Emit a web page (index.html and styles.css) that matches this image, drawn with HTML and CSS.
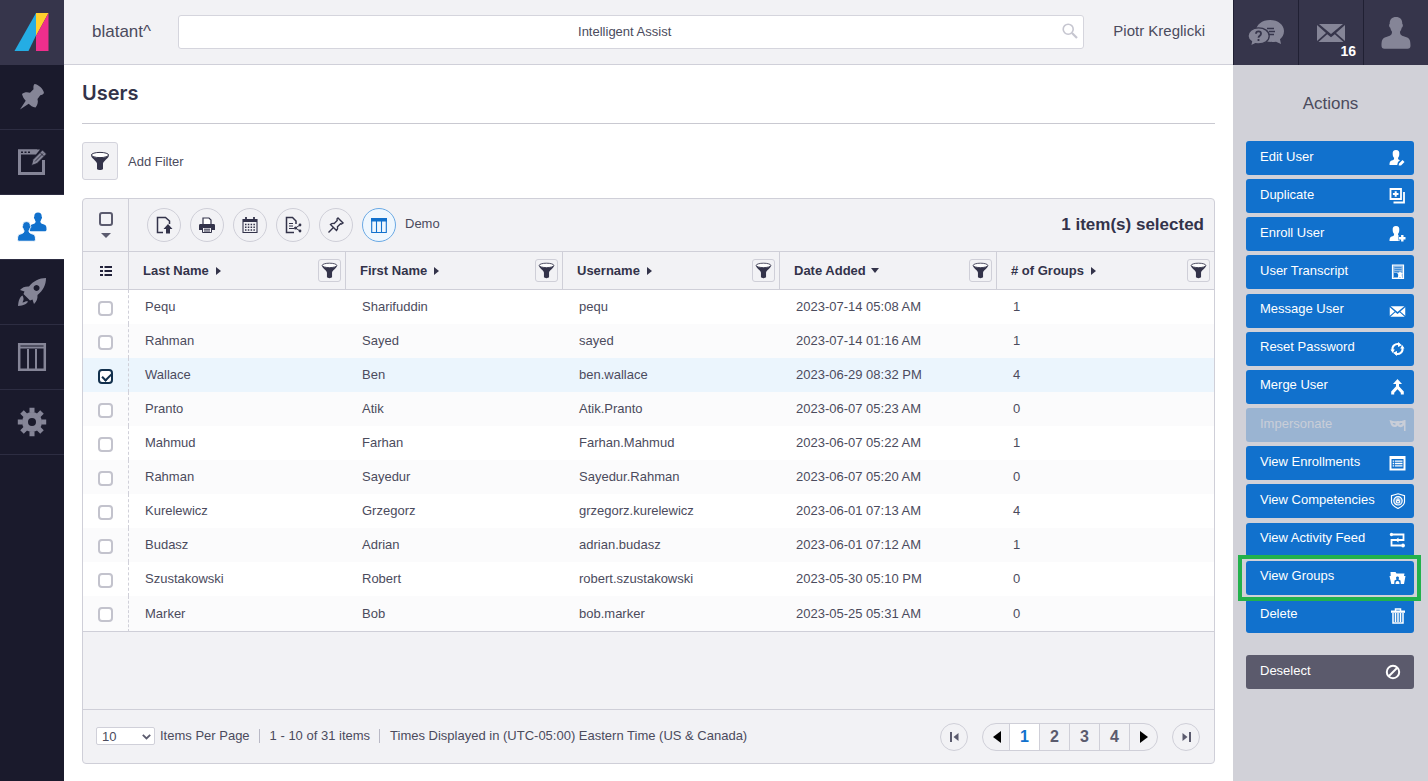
FILE: index.html
```html
<!DOCTYPE html>
<html lang="en">
<head>
<meta charset="utf-8">
<title>Users</title>
<link rel="stylesheet" href="styles.css">
</head>
<body>
<svg class="sprite" aria-hidden="true">
  <symbol id="funnel" viewBox="0 0 20 20"><ellipse cx="10" cy="4" rx="8.600" ry="2.600" fill="#fff" stroke="currentColor" stroke-width="1"/><path fill="currentColor" d="M1 4.200C3 7.600 17 7.600 19 4.200c0 2.800-6 6-6 8.300V18c-1 1.300-5 1.300-6 0v-5.500c0-2.300-6-5.500-6-8.300z"/></symbol>
  <symbol id="person" viewBox="0 0 30 34"><path fill="currentColor" d="M15 1c4 0 6.500 2.500 6.300 7 1 .3.8 3-.6 3.800-.3 2-1.200 3.200-1.700 4 0 3 1.500 4 5 5 4.500 1.200 5.500 3 5.500 9 0 2-1 3-3 3H3.500c-2 0-3-1-3-3 0-6 1-7.800 5.500-9 3.500-1 5-2 5-5-.5-.8-1.400-2-1.700-4-1.400-.8-1.600-3.500-.6-3.800C8.500 3.500 11 1 15 1z"/></symbol>
  <symbol id="mail" viewBox="0 0 28 18"><path fill="currentColor" d="M2 0h24L14 10zM0 1l9 8-9 8zM28 1l-9 8 9 8zM10.200 10.200 14 13.300l3.800-3.100L26.500 18h-25z"/></symbol>
</svg>
<div class="app">
  <nav class="rail" aria-label="Main">
    <a class="rail-item logo" href="#" aria-label="Home"><svg width="64" height="64" viewBox="0 0 64 64"><path fill="#24ade4" d="M36 13v22.500L28.500 51h-14z"/><path fill="#ffd02e" d="M36 13h12.500L36 36z"/><path fill="#f02e8c" d="M48.500 13v38H36V36z"/></svg></a>
    <a class="rail-item" href="#" aria-label="Pinned"><svg width="28" height="28" viewBox="0 0 28 28"><path fill="currentColor" d="M16.500 1c4 .5 8.500 4.500 9.500 9-1 2-2.500 1.700-3.700 2.200L19.500 16c1 3.500-.2 6.500-2 8.500-3-.5-5-2-6.800-3.800L2 26.500l5.700-8.700C6 16 4.500 13.500 4 11c2-1.800 5-2.300 8-1.300L15.500 6.300c0-1.800-.5-3.500 1-5.300z"/></svg></a>
    <a class="rail-item" href="#" aria-label="Editor"><svg width="30" height="28" viewBox="0 0 30 28"><path fill="none" stroke="currentColor" stroke-width="3" d="M20 3H2.500v22.500h24V12"/><path fill="currentColor" d="M1 1.500h22l-4 5H1z"/><path stroke="#1a1a2c" stroke-width="1.500" stroke-dasharray="2 1.500" d="M4 4.200h9"/><path fill="currentColor" stroke="#1a1a2c" stroke-width=".8" d="M14.500 17.500l1.500-6L25.500 2l4 4L20 15.500z"/><path stroke="#1a1a2c" stroke-width=".8" d="m18 13.500 8-8M23 4.500l4 4"/></svg></a>
    <a class="rail-item active" href="#" aria-label="Users"><svg width="30" height="30" viewBox="0 0 30 30"><use href="#person" x="12" y="0" width="18" height="20"/><use href="#person" x="0" y="9" width="19" height="21" stroke="#fff" stroke-width="1.500"/></svg></a>
    <a class="rail-item" href="#" aria-label="Launch"><svg width="30" height="30" viewBox="0 0 30 30"><path fill="currentColor" fill-rule="evenodd" d="M29 1c0 7-3 12.500-8.500 17 .2 4-.8 6.500-3.500 9-.6-1.500-1-3-1.500-4.500l-2.500 1-6.500-6.500 1-2.500L3 13c2.500-2.700 5-3.700 9-3.500C16.500 4 22 1 29 1zM19.500 8a3 3 0 1 0 .1 0z"/><path fill="currentColor" d="M5.500 18.500C3 20 1.500 22.500 1 29c6-.5 8.500-2 10-4.500-1.200-.2-2-.3-3 .3-.9.400-1.700.700-2.500.700.200-1 .8-1.800 1-2.800.2-1.500-.3-3-1-4.200z"/></svg></a>
    <a class="rail-item" href="#" aria-label="Tables"><svg width="30" height="30" viewBox="0 0 30 30"><path fill="none" stroke="currentColor" stroke-width="2.500" d="M2.200 2.200h25.600v25.600H2.200z"/><path stroke="currentColor" stroke-width="2" d="M2 5.500h26M11 7v20M19 7v20"/></svg></a>
    <a class="rail-item" href="#" aria-label="Settings"><svg width="30" height="30" viewBox="0 0 30 30"><circle cx="15" cy="15" r="7" fill="none" stroke="currentColor" stroke-width="6"/><path stroke="currentColor" stroke-width="5" d="M15 .8v5M15 24.200v5M.8 15h5M24.200 15h5M5 5l3.500 3.500M21.500 21.500 25 25M25 5l-3.500 3.500M8.500 21.500 5 25"/></svg></a>
  </nav>

  <div class="center">
    <header class="topbar">
      <span class="brand">blatant^</span>
      <form class="search" role="search">
        <input type="search" aria-label="Intelligent Assist" placeholder="Intelligent Assist">
        <button type="button" aria-label="Search"><svg width="16" height="16" viewBox="0 0 16 16" fill="none" stroke="#c6c6d0"><circle cx="6.200" cy="6.200" r="5" stroke-width="1.600"/><path stroke-width="2.200" d="m10 10 5 5"/></svg></button>
      </form>
      <span class="account">Piotr Kreglicki</span>
    </header>
    <main class="content">
      <h1>Users</h1>
      <div class="filter">
        <button type="button" id="add-filter" aria-labelledby="add-filter-label"><svg width="20" height="20"><use href="#funnel"/></svg></button>
        <label id="add-filter-label" for="add-filter">Add Filter</label>
      </div>
      <section class="panel">
        <div class="toolbar">
          <div class="select-all">
            <input type="checkbox" aria-label="Select all">
            <svg width="10" height="5" viewBox="0 0 10 5"><path fill="#5b5b6e" d="M0 0h10L5 5z"/></svg>
          </div>
          <div class="tools">
            <button type="button" aria-label="Export"><svg viewBox="0 0 18 18"><path fill="none" stroke="currentColor" stroke-width="1.500" d="M8 16.500H2.500v-15h8L14.500 5v3"/><path fill="currentColor" d="M13 8l4.500 5H15v4.500h-4V13H8.500z"/></svg></button>
            <button type="button" aria-label="Print"><svg viewBox="0 0 18 18"><path fill="#fff" stroke="currentColor" stroke-width="1.200" d="M5 8V2h6l2 2v4"/><path fill="currentColor" d="M2.500 8h13c1 0 1.500.5 1.500 1.500V14H1V9.500C1 8.500 1.500 8 2.500 8z"/><path fill="#f2f2f5" stroke="currentColor" d="M4.500 11.500h9v5h-9z"/><path stroke="currentColor" d="M6 13.200h6M6 15h6"/></svg></button>
            <button type="button" aria-label="Schedule"><svg viewBox="0 0 18 18"><path fill="none" stroke="currentColor" stroke-width="1.100" d="M2 3.500h14v13H2z"/><path fill="currentColor" d="M2 3h14v3H2z"/><path stroke="currentColor" stroke-width="1.800" d="M5 1v4M13 1v4"/><path stroke="currentColor" stroke-width="1.500" stroke-dasharray="1.500 1.300" d="M4 8.500h10.500M4 11.300h10.500M4 14h10.500"/></svg></button>
            <button type="button" aria-label="Share report"><svg viewBox="0 0 18 18"><path fill="none" stroke="currentColor" stroke-width="1.500" d="M10 16.500H2.500v-15h6L12 5v3"/><path fill="none" stroke="currentColor" stroke-width="1.200" d="M5 7.500h4M5 10h4M5 12.500h5"/><path fill="none" stroke="currentColor" d="m16 9-4.500 3 4.500 3"/><circle cx="16" cy="9" r="1.400" fill="currentColor"/><circle cx="11.500" cy="12" r="1.500" fill="currentColor"/><circle cx="16" cy="15" r="1.400" fill="currentColor"/></svg></button>
            <button type="button" aria-label="Pin"><svg viewBox="0 0 18 18"><path fill="none" stroke="currentColor" stroke-width="1.400" d="M11 2l5 5-1.500 1-1-.2-3 3c.4 1.500 0 2.700-1 3.700L3.500 8.500c1-1 2.300-1.400 3.700-1l3-3L10 3zM6.200 11.800 1.500 16.500"/></svg></button>
            <button type="button" class="on" aria-label="Layout" id="layout"><svg viewBox="0 0 18 18"><path fill="none" stroke="currentColor" stroke-width="1.100" d="M1.700 2.700h14.600v13.800H1.700zM6.500 5v11M11.500 5v11"/><path fill="currentColor" d="M1 2h16v3.500H1z"/></svg></button>
            <label for="layout">Demo</label>
          </div>
          <strong>1 item(s) selected</strong>
        </div>
        <table>
          <colgroup><col class="pick"><col><col><col><col><col></colgroup>
          <thead><tr>
            <th><button type="button" class="list" aria-label="Options"><svg width="12" height="10" viewBox="0 0 12 10"><path stroke="currentColor" stroke-width="2" d="M0 1h3M4.500 1H12M0 5h3M4.500 5H12M0 9h3M4.500 9H12"/></svg></button></th>
            <th><div class="head"><span>Last Name</span><i class="right"></i><button type="button" aria-label="Filter last name"><svg width="17" height="17"><use href="#funnel"/></svg></button></div></th>
            <th><div class="head"><span>First Name</span><i class="right"></i><button type="button" aria-label="Filter first name"><svg width="17" height="17"><use href="#funnel"/></svg></button></div></th>
            <th><div class="head"><span>Username</span><i class="right"></i><button type="button" aria-label="Filter username"><svg width="17" height="17"><use href="#funnel"/></svg></button></div></th>
            <th><div class="head"><span>Date Added</span><i class="down"></i><button type="button" aria-label="Filter date added"><svg width="17" height="17"><use href="#funnel"/></svg></button></div></th>
            <th><div class="head"><span># of Groups</span><i class="right"></i><button type="button" aria-label="Filter groups"><svg width="17" height="17"><use href="#funnel"/></svg></button></div></th>
          </tr></thead>
          <tbody>
            <tr><td><input type="checkbox" aria-label="Pequ"></td><td>Pequ</td><td>Sharifuddin</td><td>pequ</td><td>2023-07-14 05:08 AM</td><td>1</td></tr>
            <tr><td><input type="checkbox" aria-label="Rahman, Sayed"></td><td>Rahman</td><td>Sayed</td><td>sayed</td><td>2023-07-14 01:16 AM</td><td>1</td></tr>
            <tr class="picked"><td><input type="checkbox" aria-label="Wallace" checked></td><td>Wallace</td><td>Ben</td><td>ben.wallace</td><td>2023-06-29 08:32 PM</td><td>4</td></tr>
            <tr><td><input type="checkbox" aria-label="Pranto"></td><td>Pranto</td><td>Atik</td><td>Atik.Pranto</td><td>2023-06-07 05:23 AM</td><td>0</td></tr>
            <tr><td><input type="checkbox" aria-label="Mahmud"></td><td>Mahmud</td><td>Farhan</td><td>Farhan.Mahmud</td><td>2023-06-07 05:22 AM</td><td>1</td></tr>
            <tr><td><input type="checkbox" aria-label="Rahman, Sayedur"></td><td>Rahman</td><td>Sayedur</td><td>Sayedur.Rahman</td><td>2023-06-07 05:20 AM</td><td>0</td></tr>
            <tr><td><input type="checkbox" aria-label="Kurelewicz"></td><td>Kurelewicz</td><td>Grzegorz</td><td>grzegorz.kurelewicz</td><td>2023-06-01 07:13 AM</td><td>4</td></tr>
            <tr><td><input type="checkbox" aria-label="Budasz"></td><td>Budasz</td><td>Adrian</td><td>adrian.budasz</td><td>2023-06-01 07:12 AM</td><td>1</td></tr>
            <tr><td><input type="checkbox" aria-label="Szustakowski"></td><td>Szustakowski</td><td>Robert</td><td>robert.szustakowski</td><td>2023-05-30 05:10 PM</td><td>0</td></tr>
            <tr><td><input type="checkbox" aria-label="Marker"></td><td>Marker</td><td>Bob</td><td>bob.marker</td><td>2023-05-25 05:31 AM</td><td>0</td></tr>
          </tbody>
        </table>
        <footer class="foot">
          <div class="info">
            <span class="size"><select id="size"><option>10</option><option>25</option><option>50</option></select><svg width="9" height="6" viewBox="0 0 9 6"><path fill="none" stroke="#5b5b6e" stroke-width="1.800" d="m.8.8 3.700 3.700L8.200.8"/></svg></span>
            <label for="size">Items Per Page</label>
            <span class="part">1 - 10 of 31 items</span>
            <span class="part">Times Displayed in (UTC-05:00) Eastern Time (US &amp; Canada)</span>
          </div>
          <nav class="pages" aria-label="Pages">
            <button type="button" class="end" aria-label="First page"><svg width="9" height="10" viewBox="0 0 9 10"><path fill="#5b5b6e" d="M0 0h2v10H0zM8.500 1v8L3.500 5z"/></svg></button>
            <div class="group">
              <button type="button" aria-label="Previous page"><svg width="8" height="12" viewBox="0 0 8 12"><path d="M8 0v12L0 6z"/></svg></button>
              <button type="button" class="current">1</button>
              <button type="button">2</button>
              <button type="button">3</button>
              <button type="button">4</button>
              <button type="button" aria-label="Next page"><svg width="8" height="12" viewBox="0 0 8 12"><path d="M0 0v12l8-6z"/></svg></button>
            </div>
            <button type="button" class="end" aria-label="Last page"><svg width="9" height="10" viewBox="0 0 9 10"><path fill="#5b5b6e" d="M7 0h2v10H7zM.5 1v8l5-4z"/></svg></button>
          </nav>
        </footer>
      </section>
    </main>
  </div>

  <aside class="side">
    <div class="quick">
      <button type="button" aria-label="Help chat"><svg width="38" height="30" viewBox="0 0 38 30"><path fill="currentColor" d="M23 2c8 0 14 4.800 14 11 0 4-2 6.500-4 8.200l1 4.800-5-2.300c-12 1.300-20-3.700-20-10.700C9 6.800 15 2 23 2z"/><path stroke="#36354b" stroke-width="1.300" d="M20 10.500h7M22 13.500h6M21 16.500h6"/><path fill="currentColor" stroke="#36354b" stroke-width="1.300" d="M11.500 9.800c6 0 10.700 3.500 10.700 8.200s-4.700 8-10.700 8c-1 0-2-.1-3-.4L3.500 28l1-4.500C2.300 22 1 20.200 1 18c0-4.700 4.500-8.200 10.500-8.200z"/><path fill="none" stroke="#36354b" stroke-width="1.800" d="M9 15.700c.2-3.200 5-2.900 5 0 0 2-2.500 2-2.500 4M11.500 21v2"/></svg></button>
      <button type="button" aria-label="Messages, 16"><svg width="28" height="18"><use href="#mail"/></svg><span class="count">16</span></button>
      <button type="button" aria-label="Profile"><svg width="30" height="34"><use href="#person"/></svg></button>
    </div>
    <h2>Actions</h2>
    <ul class="actions">
      <li><button type="button">Edit User<svg viewBox="0 0 16 16"><path fill="currentColor" d="M6.500 0C9 0 10 1.500 9.800 4c0 2-.5 3-1.300 3.800 0 1.500.5 2 2 2.500L8.500 12l-.8 3H0c0-3 .5-4 3-4.700 1.300-.4 1.600-1 1.600-2.500C3.700 7 3.200 6 3.200 4 3 1.500 4 0 6.500 0zM9.500 13.500 13 10l2 2-3.500 3.500H9.200z"/></svg></button></li>
      <li><button type="button">Duplicate<svg viewBox="0 0 16 16"><path fill="none" stroke="currentColor" stroke-width="1.800" d="M1 1h10.500v10H1zM14.500 4v10.500H4"/><path stroke="currentColor" stroke-width="2" d="M6.200 3.200v5.600M3.400 6h5.600"/></svg></button></li>
      <li><button type="button">Enroll User<svg viewBox="0 0 16 16"><path fill="currentColor" d="M6.500 0C9 0 10 1.500 9.800 4c0 2-.5 3-1.300 3.800 0 1.200.3 1.800 1 2.200v3.500h1V15H0c0-3 .5-4 3-4.700 1.300-.4 1.600-1 1.600-2.500C3.700 7 3.200 6 3.200 4 3 1.500 4 0 6.500 0z"/><path stroke="#1171cd" stroke-width="4.500" d="M12.800 8v8M9 12.200h7"/><path stroke="currentColor" stroke-width="2.400" d="M12.800 9v6.500M9.500 12.200H16"/></svg></button></li>
      <li><button type="button">User Transcript<svg viewBox="0 0 16 16"><path fill="#8ebbe8" stroke="currentColor" stroke-width="1.200" d="M3 1h11v13.500H3z"/><path stroke="#1171cd" stroke-width=".6" d="M5 3.500h7M5 5.500h7M5 7.500h7"/><path fill="#1171cd" d="M4.500 9h4v4h-4z"/><path fill="currentColor" d="m10.500 7 1 2 2 .3-1.500 1.500 1 4.200-2.500-2-2.500 2 1-4.200-1.500-1.500 2-.3z"/></svg></button></li>
      <li><button type="button">Message User<svg viewBox="0 0 16 16"><use href="#mail" y="3" width="16" height="11"/></svg></button></li>
      <li><button type="button">Reset Password<svg viewBox="0 0 16 16"><path fill="none" stroke="currentColor" stroke-width="2" d="M3.200 9.500A5 5 0 0 1 10 3.400M12.800 6.500A5 5 0 0 1 6 12.600"/><path fill="currentColor" d="M8.500 1 12.500 4.200 8.500 6zM7.500 10v5L3.500 11.800zM1 8.500h4.400L3.200 12zM10.600 7.500H15L12.800 4z"/></svg></button></li>
      <li><button type="button">Merge User<svg viewBox="0 0 16 16"><path fill="none" stroke="currentColor" stroke-width="3" d="M8 2v6.500M3.200 15.500v-2.300L8 8l4.800 5.200v2.300"/><path fill="currentColor" d="m8 0 4.500 5h-9z"/></svg></button></li>
      <li><button type="button" disabled>Impersonate<svg viewBox="0 0 16 16"><path fill="currentColor" fill-rule="evenodd" d="M0 3c4 1.500 6 1.500 8 1 2 .3 4 .2 7-1h1v11h-1.500V8c-1 2.500-5 3-6.500.5C6.500 11 2 10.500 1 6.500zM3 6.500c1 1.300 2.500 1.500 3.500.5-1-1-2.500-1.200-3.500-.5zm6.500.5c1 1 2.500.8 3.500-.5-1-.7-2.500-.5-3.500.5z"/></svg></button></li>
      <li><button type="button">View Enrollments<svg viewBox="0 0 16 16"><path fill="none" stroke="currentColor" stroke-width="2" d="M1 2h14v12.500H1z"/><path fill="currentColor" d="M1 1h14v3H1z"/><path stroke="currentColor" stroke-width="1.300" d="M3.200 6.200h1.500M5.500 6.200h7.500M3.200 8.500h1.500M5.500 8.500h7.500M3.200 10.800h1.500M5.500 10.800h7.500"/></svg></button></li>
      <li><button type="button">View Competencies<svg viewBox="0 0 16 16"><path fill="none" stroke="currentColor" stroke-width="1.200" d="m8.500.8 6.500 2V9c0 3-3.500 5-6.500 6.500C5.500 14 2 12 2 9V2.800z"/><circle cx="8.500" cy="7.800" r="4.200" fill="#5b9bdc" stroke="currentColor" stroke-width="1.200"/><path fill="none" stroke="currentColor" d="M7 7.500h3v2.300H7zM7.500 7.500V6h2v1.500"/></svg></button></li>
      <li><button type="button">View Activity Feed<svg viewBox="0 0 16 16"><path fill="none" stroke="currentColor" stroke-width="1.800" d="M3 2.500h11V8H2v5.500h10"/><circle cx="2" cy="2.500" r="1.700" fill="currentColor"/><circle cx="13.500" cy="13.500" r="1.900" fill="currentColor"/><path fill="currentColor" d="M9 5.500v5L6 8z"/></svg></button></li>
      <li class="highlight"><button type="button">View Groups<svg viewBox="0 0 16 16"><path fill="currentColor" d="M1 2h5l1 1.500h8L14.500 6H16l-1.500 8h-3.200L11 10.500 9 9.500 9.500 8c0-2-3-2-3 0L7 9.500l-2 1-.3 3.500H1.800L0 6h1.200z"/><path fill="currentColor" d="M6 14c0-2 .5-3 2-3s2 1 2 3z"/></svg></button></li>
      <li><button type="button">Delete<svg viewBox="0 0 16 16"><path fill="none" stroke="currentColor" stroke-width="1.500" d="M6 3V1h5v2"/><path fill="currentColor" d="M1.500 2.500h14v2.300h-14z"/><path fill="none" stroke="currentColor" stroke-width="1.500" d="M3.500 5v10h10V5M6 5v9M8.500 5v9M11 5v9"/></svg></button></li>
    </ul>
    <button type="button" class="deselect">Deselect<svg viewBox="0 0 16 16" fill="none" stroke="currentColor" stroke-width="2"><circle cx="8" cy="8" r="6.200"/><path d="m4 12 8-8"/></svg></button>
  </aside>
</div>
</body>
</html>
```
FILE: styles.css
```css
* { box-sizing: border-box; }
body {
  margin: 0;
  font: 13px/18px "Liberation Sans", Arial, sans-serif;
  color: #4b4b5d;
  background: #fff;
}
button, input, select { font: inherit; color: inherit; margin: 0; }
button {
  display: flex;
  align-items: center;
  justify-content: center;
  padding: 0;
  border: 0;
  background: none;
}
svg { display: block; flex: none; }
.sprite { position: absolute; width: 0; height: 0; }

.app {
  display: grid;
  grid-template-columns: 64px minmax(0, 1fr) 195px;
  min-height: 100vh;
}

.rail { background: #1a1a2c; }
.rail-item {
  display: flex;
  align-items: center;
  justify-content: center;
  height: 65px;
  border-bottom: 1px solid #2d2d42;
  color: #858597;
}
.rail-item.logo { background: #36354b; border-color: #36354b; }
.rail-item.active { background: #fff; color: #1171cd; }

.center { display: flex; flex-direction: column; }
.topbar {
  display: flex;
  align-items: center;
  height: 65px;
  padding: 0 28px;
  border-bottom: 1px solid #d0d0d9;
  background: #f2f2f5;
}
.brand { flex: none; width: 86px; font-size: 17px; }
.search {
  position: relative;
  flex: 1;
  height: 34px;
}
.search input {
  width: 100%;
  height: 100%;
  padding: 0 14px 2px;
  border: 1px solid #d5d5dd;
  border-radius: 3px;
  background: #fff;
  text-align: center;
  outline: 0;
}
.search input::placeholder { color: #4b4b5d; opacity: 1; }
.search button { position: absolute; right: 6px; top: 8px; }
.account { margin-left: 29px; padding-bottom: 2px; font-size: 15px; }

.content {
  flex: 1;
  display: flex;
  flex-direction: column;
  padding: 0 18px 17px;
}
h1 {
  margin: 0;
  padding: 16px 0 17px;
  border-bottom: 1px solid #c9c9d1;
  font: 600 20px/25px Inter, sans-serif;
  color: #33334a;
}
.filter { display: flex; align-items: center; gap: 10px; margin: 18px 0; }
.filter label { padding-top: 2px; }
.filter button {
  width: 36px;
  height: 38px;
  border: 1px solid #d3d3dc;
  border-radius: 3px;
  background: #f2f2f5;
  color: #33334a;
}

.panel {
  flex: 1;
  display: flex;
  flex-direction: column;
  border: 1px solid #cfcfd8;
  border-radius: 4px;
  background: #f2f2f5;
}
.toolbar {
  display: flex;
  align-items: center;
  height: 53px;
  border-bottom: 1px solid #cfcfd8;
}
.select-all {
  display: flex;
  flex-direction: column;
  align-items: center;
  justify-content: center;
  gap: 7px;
  width: 46px;
  height: 100%;
  padding-bottom: 1px;
  border-right: 1px solid #cfcfd8;
}
.tools { flex: 1; display: flex; align-items: center; gap: 9px; padding-left: 18px; }
.tools label { padding-bottom: 2px; }
.tools button {
  width: 34px;
  height: 34px;
  border: 1px solid #cfcfd8;
  border-radius: 50%;
  color: #33334a;
}
.tools button svg { width: 18px; height: 18px; }
.tools button.on { border-color: #6aa9e4; background: #eff7fe; color: #1171cd; }
.toolbar strong { padding-right: 10px; font-size: 17px; color: #33334a; }

input[type="checkbox"] {
  appearance: none;
  display: block;
  width: 15px;
  height: 15px;
  border: 2px solid #c3c3cd;
  border-radius: 4px;
  background: #fff;
}
.select-all input[type="checkbox"] {
  width: 14px;
  height: 14px;
  border-color: #5b5b6e;
  border-radius: 3px;
  background: none;
}
input[type="checkbox"]:checked { border-color: #12304d; }
input[type="checkbox"]:checked::after {
  content: "";
  display: block;
  width: 8px;
  height: 4px;
  margin: 2px;
  border: solid #12304d;
  border-width: 0 0 2px 2px;
  transform: rotate(-45deg);
}

table {
  width: 100%;
  table-layout: fixed;
  border-collapse: separate;
  border-spacing: 0;
}
.pick { width: 46px; }
th {
  height: 38px;
  padding: 0;
  border-right: 1px solid #cfcfd8;
  border-bottom: 1px solid #cfcfd8;
  color: #33334a;
}
th:last-child { border-right: 0; }
.list { width: 100%; height: 36px; color: #22223a; }
.head { display: flex; align-items: center; padding: 0 4px 0 14px; }
.head button {
  width: 23px;
  height: 23px;
  margin-left: auto;
  border: 1px solid #cfcfd8;
  border-radius: 3px;
}
.right {
  margin-left: 7px;
  border: solid transparent;
  border-width: 4px 0 4px 5px;
  border-left-color: #33334a;
}
.down {
  margin-left: 5px;
  border: solid transparent;
  border-width: 5px 4px 0;
  border-top-color: #33334a;
}
td { height: 34px; padding: 0 0 0 16px; background: #fff; }
td:first-child { padding: 2px 0 0 15px; border-right: 1px dashed #d0d0d9; }
tr:nth-child(even) td { background: #fbfbfc; }
tr.picked td { background: #ebf5fd; }
tbody tr:last-child td { height: 36px; border-bottom: 1px solid #cfcfd8; }

.foot {
  display: flex;
  align-items: center;
  justify-content: space-between;
  height: 54px;
  margin-top: auto;
  padding: 0 14px 0 13px;
  border-top: 1px solid #cfcfd8;
}
.info { display: flex; align-items: center; padding-bottom: 2px; }
.size { position: relative; margin-right: 5px; }
.size select {
  appearance: none;
  display: block;
  width: 59px;
  height: 18px;
  padding: 0 5px;
  border: 1px solid #d0d0d9;
  border-radius: 2px;
  background: #fff;
}
.size svg { position: absolute; right: 4px; top: 7px; }
.part { display: flex; align-items: center; }
.part::before {
  content: "";
  width: 1px;
  height: 14px;
  margin: 0 10px 0 9px;
  background: #b9b9c6;
}
.pages { display: flex; align-items: center; gap: 14px; }
.end { width: 28px; height: 28px; border: 1px solid #cfcfd8; border-radius: 50%; }
.group {
  display: flex;
  height: 28px;
  overflow: hidden;
  border: 1px solid #cfcfd8;
  border-radius: 14px;
  color: #5b5b6e;
  font-size: 16px;
  font-weight: 700;
}
.group button { width: 30px; border-right: 1px solid #cfcfd8; }
.group button:first-child, .group button:last-child { width: 27px; }
.group button:first-child { padding-left: 2px; }
.group button:last-child { border-right: 0; }
.group .current { background: #fff; color: #1171cd; }

.side { display: flex; flex-direction: column; background: #d1d1d8; }
.quick {
  display: grid;
  grid-template-columns: repeat(3, 1fr);
  height: 65px;
  background: #36354b;
  color: #858597;
}
.quick button { position: relative; border-left: 1px solid #202033; }
.quick .count {
  position: absolute;
  right: 7px;
  bottom: 5px;
  color: #fff;
  font-size: 14px;
  font-weight: 700;
}
h2 {
  margin: 0;
  padding: 27px 0 25px;
  font: 17px/24px "Liberation Sans", Arial, sans-serif;
  text-align: center;
}
.actions {
  display: flex;
  flex-direction: column;
  justify-content: space-between;
  min-height: 492px;
  margin: 0;
  padding: 0 14px 0 13px;
  list-style: none;
}
.actions button, .deselect {
  justify-content: space-between;
  width: 100%;
  height: 34px;
  padding: 0 8px 3px 14px;
  border-radius: 3px;
  background: #1171cd;
  color: #fff;
}
.actions button svg { width: 17px; height: 16px; margin-top: 3px; }
.actions button:disabled { background: #9ab4d2; color: #c9ced8; }
.highlight { position: relative; z-index: 1; }
.highlight::after {
  content: "";
  position: absolute;
  inset: -6px -7px -6px -8px;
  border: 4px solid #22b14c;
  pointer-events: none;
}
.side .deselect { width: auto; margin: 22px 14px 0 13px; padding-right: 13px; background: #5b5a6c; }
.deselect svg { width: 16px; height: 16px; margin-top: 2px; }
```
